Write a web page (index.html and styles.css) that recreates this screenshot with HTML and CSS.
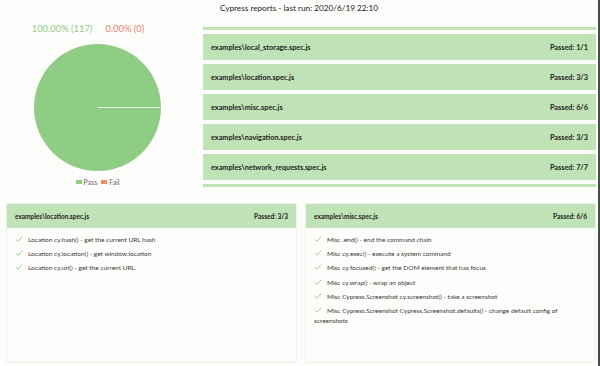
FILE: index.html
```html
<!DOCTYPE html>
<html lang="en">
<head>
    <meta charset="UTF-8">
    <title>Cypress reports</title>
    <link rel="stylesheet" href="styles.css">
</head>
<body>
    <div class="page">
        <h1 class="title">Cypress reports - last run: 2020/6/19 22:10</h1>

        <div class="top">
            <div class="chart">
                <div class="pcts">
                    <span class="pct-pass">100.00% (117)</span>
                    <span class="pct-fail">0.00% (0)</span>
                </div>
                <svg class="pie" width="127" height="127" viewBox="0 0 127 127">
                    <circle cx="63.5" cy="63.5" r="63.5" fill="#90cd84"/>
                    <line x1="63.5" y1="63.5" x2="127" y2="63.5" stroke="#e6f3e2" stroke-width="1"/>
                </svg>
                <div class="legend">
                    <span class="key"><i class="swatch pass"></i>Pass</span>
                    <span class="key"><i class="swatch fail"></i>Fail</span>
                </div>
            </div>

            <div class="spec-list">
                <div class="spec peek"></div>
                <div class="spec"><span>examples\local_storage.spec.js</span><span>Passed: 1/1</span></div>
                <div class="spec"><span>examples\location.spec.js</span><span>Passed: 3/3</span></div>
                <div class="spec"><span>examples\misc.spec.js</span><span>Passed: 6/6</span></div>
                <div class="spec"><span>examples\navigation.spec.js</span><span>Passed: 3/3</span></div>
                <div class="spec"><span>examples\network_requests.spec.js</span><span>Passed: 7/7</span></div>
                <div class="spec peek"></div>
            </div>
        </div>

        <div class="cards">
            <div class="card">
                <div class="card-head"><span>examples\location.spec.js</span><span>Passed: 3/3</span></div>
                <ul class="tests">
                    <li><svg class="check" viewBox="0 0 9 7"><path d="M0.6 3.8 L3.2 6.1 L8.4 0.8"/></svg>Location cy.hash() - get the current URL hash</li>
                    <li><svg class="check" viewBox="0 0 9 7"><path d="M0.6 3.8 L3.2 6.1 L8.4 0.8"/></svg>Location cy.location() - get window.location</li>
                    <li><svg class="check" viewBox="0 0 9 7"><path d="M0.6 3.8 L3.2 6.1 L8.4 0.8"/></svg>Location cy.url() - get the current URL</li>
                </ul>
            </div>
            <div class="card">
                <div class="card-head"><span>examples\misc.spec.js</span><span>Passed: 6/6</span></div>
                <ul class="tests">
                    <li><svg class="check" viewBox="0 0 9 7"><path d="M0.6 3.8 L3.2 6.1 L8.4 0.8"/></svg>Misc .end() - end the command chain</li>
                    <li><svg class="check" viewBox="0 0 9 7"><path d="M0.6 3.8 L3.2 6.1 L8.4 0.8"/></svg>Misc cy.exec() - execute a system command</li>
                    <li><svg class="check" viewBox="0 0 9 7"><path d="M0.6 3.8 L3.2 6.1 L8.4 0.8"/></svg>Misc cy.focused() - get the DOM element that has focus</li>
                    <li><svg class="check" viewBox="0 0 9 7"><path d="M0.6 3.8 L3.2 6.1 L8.4 0.8"/></svg>Misc cy.wrap() - wrap an object</li>
                    <li><svg class="check" viewBox="0 0 9 7"><path d="M0.6 3.8 L3.2 6.1 L8.4 0.8"/></svg>Misc Cypress.Screenshot cy.screenshot() - take a screenshot</li>
                    <li><svg class="check" viewBox="0 0 9 7"><path d="M0.6 3.8 L3.2 6.1 L8.4 0.8"/></svg>Misc Cypress.Screenshot Cypress.Screenshot.defaults() - change default config of screenshots</li>
                </ul>
            </div>
        </div>
    </div>
</body>
</html>
```

FILE: styles.css
```css
body {
    margin: 0;
    background: #fdfdfb;
    font-family: Lato, "Noto Sans", sans-serif;
    color: #333;
}
.page {
    height: 366px;
    border-right: 2px solid #4a4a4a;
    box-sizing: border-box;
    overflow: hidden;
}
.title {
    margin: 0;
    height: 22px;
    padding-top: 1px;
    box-sizing: border-box;
    text-align: center;
    font-size: 8.2px;
    font-weight: normal;
    line-height: 14px;
    color: #222;
}
.top {
    display: flex;
    height: 165px;
}
.chart {
    width: 195px;
    display: flex;
    flex-direction: column;
    align-items: center;
}
.pcts {
    display: flex;
    gap: 13px;
    font-size: 9.4px;
    line-height: 14px;
    padding-right: 19px;
}
.pct-pass {
    color: #93cc84;
}
.pct-fail {
    color: #e5826c;
}
.pie {
    display: block;
    margin-top: 8px;
    margin-right: 1px;
}
.legend {
    display: flex;
    gap: 4px;
    margin-top: 6px;
    font-size: 7px;
    line-height: 10px;
    color: #666;
}
.key {
    display: flex;
    align-items: center;
    gap: 2px;
}
.swatch {
    width: 6px;
    height: 4px;
}
.swatch.pass {
    background: #90cd84;
}
.swatch.fail {
    background: #f08a6e;
}
.spec-list {
    flex: 1;
    margin: 5px 2px 0 8px;
    display: flex;
    flex-direction: column;
    gap: 4px;
}
.spec {
    height: 26px;
    display: flex;
    justify-content: space-between;
    align-items: center;
    padding: 0 8px;
    background: #bfe2b6;
    font-size: 7.3px;
    font-weight: 700;
    color: #222;
}
.spec.peek {
    height: 3px;
}
.cards {
    display: grid;
    grid-template-columns: 1fr 1fr;
    gap: 8px;
    margin: 16px 2px 0 6px;
}
.card {
    height: 160px;
    border: 1px solid #eef2e8;
    background: #fdfefb;
    box-sizing: border-box;
}
.card-head {
    height: 24px;
    display: flex;
    justify-content: space-between;
    align-items: center;
    padding: 0 8px;
    background: #bfe2b6;
    font-size: 6.5px;
    font-weight: 700;
    color: #222;
}
.tests {
    list-style: none;
    margin: 0;
    padding: 7px 8px 0 8px;
    font-size: 6.5px;
    line-height: 10.2px;
    color: #3a3a3a;
}
.tests li {
    margin-bottom: 4px;
}
.check {
    width: 8px;
    height: 6px;
    margin-right: 5px;
    fill: none;
    stroke: #8fcb82;
    stroke-width: 1.1;
}
```
